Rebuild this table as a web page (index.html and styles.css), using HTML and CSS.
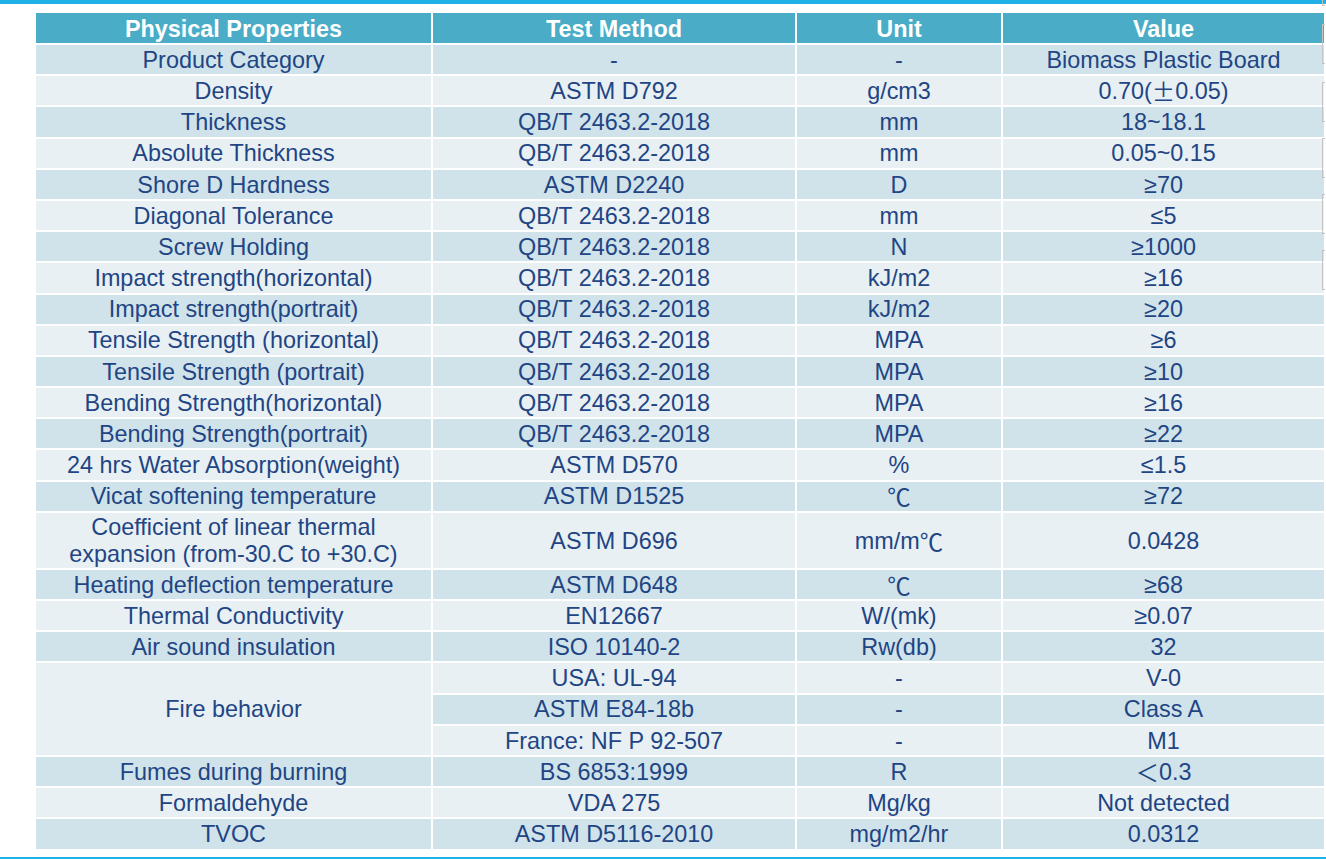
FILE: index.html
```html
<!DOCTYPE html>
<html lang="en">
<head>
<meta charset="utf-8">
<title>Physical Properties</title>
<link rel="stylesheet" href="styles.css">
</head>
<body>
<div class="topbar"></div>
<div class="sheet">
  <div class="grid head">
    <div>Physical Properties</div>
    <div>Test Method</div>
    <div>Unit</div>
    <div>Value</div>
  </div>
  <div class="grid body">
    <div class="row dk"><div>Product Category</div><div>-</div><div>-</div><div>Biomass Plastic Board</div></div>
    <div class="row lt"><div>Density</div><div>ASTM D792</div><div>g/cm3</div><div>0.70(<span class="cjk">±</span>0.05)</div></div>
    <div class="row dk"><div>Thickness</div><div>QB/T 2463.2-2018</div><div>mm</div><div>18~18.1</div></div>
    <div class="row lt"><div>Absolute Thickness</div><div>QB/T 2463.2-2018</div><div>mm</div><div>0.05~0.15</div></div>
    <div class="row dk"><div>Shore D Hardness</div><div>ASTM D2240</div><div>D</div><div>≥70</div></div>
    <div class="row lt"><div>Diagonal Tolerance</div><div>QB/T 2463.2-2018</div><div>mm</div><div>≤5</div></div>
    <div class="row dk"><div>Screw Holding</div><div>QB/T 2463.2-2018</div><div>N</div><div>≥1000</div></div>
    <div class="row lt"><div>Impact strength(horizontal)</div><div>QB/T 2463.2-2018</div><div>kJ/m2</div><div>≥16</div></div>
    <div class="row dk"><div>Impact strength(portrait)</div><div>QB/T 2463.2-2018</div><div>kJ/m2</div><div>≥20</div></div>
    <div class="row lt"><div>Tensile Strength (horizontal)</div><div>QB/T 2463.2-2018</div><div>MPA</div><div>≥6</div></div>
    <div class="row dk"><div>Tensile Strength (portrait)</div><div>QB/T 2463.2-2018</div><div>MPA</div><div>≥10</div></div>
    <div class="row lt"><div>Bending Strength(horizontal)</div><div>QB/T 2463.2-2018</div><div>MPA</div><div>≥16</div></div>
    <div class="row dk"><div>Bending Strength(portrait)</div><div>QB/T 2463.2-2018</div><div>MPA</div><div>≥22</div></div>
    <div class="row lt"><div>24 hrs Water Absorption(weight)</div><div>ASTM D570</div><div>%</div><div>≤1.5</div></div>
    <div class="row dk"><div>Vicat softening temperature</div><div>ASTM D1525</div><div><span class="cjk">℃</span></div><div>≥72</div></div>
    <div class="row lt"><div>Coefficient of linear thermal<br>expansion (from-30.C to +30.C)</div><div>ASTM D696</div><div>mm/m<span class="cjk">℃</span></div><div>0.0428</div></div>
    <div class="row dk"><div>Heating deflection temperature</div><div>ASTM D648</div><div><span class="cjk">℃</span></div><div>≥68</div></div>
    <div class="row lt"><div>Thermal Conductivity</div><div>EN12667</div><div>W/(mk)</div><div>≥0.07</div></div>
    <div class="row dk"><div>Air sound insulation</div><div>ISO 10140-2</div><div>Rw(db)</div><div>32</div></div>
    <div class="row lt"><div class="span3">Fire behavior</div><div>USA: UL-94</div><div>-</div><div>V-0</div></div>
    <div class="row dk"><div>ASTM E84-18b</div><div>-</div><div>Class A</div></div>
    <div class="row lt"><div>France: NF P 92-507</div><div>-</div><div>M1</div></div>
    <div class="row dk"><div>Fumes during burning</div><div>BS 6853:1999</div><div>R</div><div><span class="cjk">＜</span>0.3</div></div>
    <div class="row lt"><div>Formaldehyde</div><div>VDA 275</div><div>Mg/kg</div><div>Not detected</div></div>
    <div class="row dk"><div>TVOC</div><div>ASTM D5116-2010</div><div>mg/m2/hr</div><div>0.0312</div></div>
  </div>
</div>
<div class="bottombar"></div>
<div class="frame f0"></div>
<div class="frame f1"></div>
<div class="frame f2"></div>
<div class="frame f3"></div>
<div class="frame f4"></div>
<div class="frame f5"></div>
</body>
</html>
```
FILE: styles.css
```css
html, body {
  margin: 0;
  padding: 0;
  background: #ffffff;
}
body {
  position: relative;
  width: 1326px;
  height: 859px;
  overflow: hidden;
  font-family: "Liberation Sans", Arial, "Noto Sans CJK SC", sans-serif;
  font-size: 23.4px;
  line-height: 1.18;
  color: #1f4584;
}
.topbar {
  height: 4px;
  background: #1eb0e6;
}
.sheet {
  margin: 8.5px 0 0 36px;
}
.grid {
  display: grid;
  grid-template-columns: 395px 362px 204px 321px;
  column-gap: 2px;
}
.head {
  height: 28px;
  margin-bottom: 4.5px;
}
.head > div {
  background: #4aacc6;
  color: #ffffff;
  font-weight: bold;
  display: flex;
  align-items: center;
  justify-content: center;
  padding-top: 3px;
  box-sizing: border-box;
}
.body {
  row-gap: 2px;
  grid-template-rows: repeat(15, 29.2px) 55px repeat(9, 29.2px);
}
.row {
  display: contents;
}
.row > div {
  display: flex;
  align-items: center;
  justify-content: center;
  text-align: center;
  white-space: nowrap;
  padding-top: 2px;
  box-sizing: border-box;
}
.row.dk > div {
  background: #d0e3ea;
}
.row.lt > div {
  background: #e8f0f3;
}
.row > .span3 {
  grid-row: span 3;
}
.row.lt > .span3 {
  background: #e8f0f3;
}
.cjk {
  font-family: "Noto Sans CJK SC", sans-serif;
}
.bottombar {
  position: absolute;
  left: 0;
  right: 0;
  top: 857px;
  height: 2px;
  background: #1eb0e6;
}
.frame {
  position: absolute;
  left: 1322px;
  width: 3px;
  height: 40px;
  border-left: 1.5px solid #c4c4c4;
  border-top: 1.5px solid #c4c4c4;
  border-bottom: 1.5px solid #c4c4c4;
  box-sizing: border-box;
}
.f0 { top: -34px; }
.f1 { top: 24px; }
.f2 { top: 82px; }
.f3 { top: 138px; }
.f4 { top: 194px; }
.f5 { top: 250px; }
```
